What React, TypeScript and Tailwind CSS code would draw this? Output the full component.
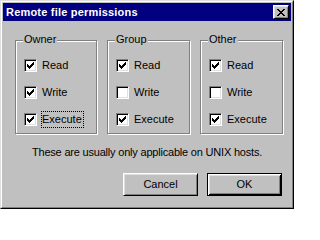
import React from "react";

const CHECK_ROWS: [number, number, number][] = [
  [6, 0, 1],
  [5, 1, 2],
  [0, 2, 1],
  [4, 2, 3],
  [0, 3, 2],
  [3, 3, 3],
  [0, 4, 5],
  [1, 5, 3],
  [2, 6, 1],
];

function CheckMark() {
  return (
    <svg width="7" height="7" viewBox="0 0 7 7" shapeRendering="crispEdges">
      {CHECK_ROWS.map(([x, y, w], i) => (
        <rect key={i} x={x} y={y} width={w} height={1} fill="#000" />
      ))}
    </svg>
  );
}

const X_ROWS: [number, number, number][] = [
  [0, 0, 2],
  [6, 0, 2],
  [1, 1, 2],
  [5, 1, 2],
  [2, 2, 4],
  [3, 3, 2],
  [2, 4, 4],
  [1, 5, 2],
  [5, 5, 2],
  [0, 6, 2],
  [6, 6, 2],
];

function CloseGlyph() {
  return (
    <svg width="8" height="7" viewBox="0 0 8 7" shapeRendering="crispEdges">
      {X_ROWS.map(([x, y, w], i) => (
        <rect key={i} x={x} y={y} width={w} height={1} fill="#000" />
      ))}
    </svg>
  );
}

function Checkbox({ label, checked, focused }: { label: string; checked: boolean; focused?: boolean }) {
  return (
    <div className="flex items-center h-[13px] gap-[4px]">
      <div className="w-[13px] h-[13px] shrink-0 bg-white border border-t-[#808080] border-l-[#808080] border-r-white border-b-white shadow-[inset_1px_1px_0_#000,inset_-1px_-1px_0_#dfdfdf] flex items-center justify-center">
        {checked && <CheckMark />}
      </div>
      <span
        className={
          "leading-[15px] h-[17px] pr-[1px] border border-dotted " +
          (focused ? "border-black" : "border-transparent")
        }
      >
        {label}
      </span>
    </div>
  );
}

function Group({
  title,
  width,
  items,
}: {
  title: string;
  width: string;
  items: { label: string; checked: boolean; focused?: boolean }[];
}) {
  return (
    <div
      className={
        "relative h-[94px] border border-[#808080] shadow-[inset_1px_1px_0_#fff,1px_1px_0_#fff] pt-[18px] pl-[8px] " +
        width
      }
    >
      <span className="absolute top-[-8px] left-[7px] px-[1px] bg-[#c0c0c0] leading-[13px]">{title}</span>
      <div className="flex flex-col gap-[14px]">
        {items.map((it) => (
          <Checkbox key={it.label} {...it} />
        ))}
      </div>
    </div>
  );
}

export default function App() {
  return (
    <div className="w-[294px] h-[209px] bg-[#c0c0c0] border border-t-[#dfdfdf] border-l-[#dfdfdf] border-r-black border-b-black font-['Liberation_Sans',Arial,sans-serif] text-[11px] text-black">
      <div className="h-full border border-t-white border-l-white border-r-[#808080] border-b-[#808080] p-px flex flex-col">
        <div className="h-[18px] bg-[#000080] flex items-center justify-between pl-[3px] pr-[2px]">
          <span className="text-white font-bold text-[11px] leading-[13px] tracking-[0.2px]">Remote file permissions</span>
          <div className="w-[16px] h-[14px] bg-[#c0c0c0] border border-t-white border-l-white border-r-black border-b-black shadow-[inset_1px_1px_0_#dfdfdf,inset_-1px_-1px_0_#808080] flex items-center justify-center">
            <CloseGlyph />
          </div>
        </div>
        <div className="flex gap-[10px] mt-[19px] ml-[12px]">
          <Group
            title="Owner"
            width="w-[82px]"
            items={[
              { label: "Read", checked: true },
              { label: "Write", checked: true },
              { label: "Execute", checked: true, focused: true },
            ]}
          />
          <Group
            title="Group"
            width="w-[83px]"
            items={[
              { label: "Read", checked: true },
              { label: "Write", checked: false },
              { label: "Execute", checked: true },
            ]}
          />
          <Group
            title="Other"
            width="w-[83px]"
            items={[
              { label: "Read", checked: true },
              { label: "Write", checked: false },
              { label: "Execute", checked: true },
            ]}
          />
        </div>
        <div className="mt-[12px] text-center leading-[13px] tracking-[-0.2px]">These are usually only applicable on UNIX hosts.</div>
        <div className="mt-[14px] flex justify-end gap-[9px] pr-[9px]">
          <div className="w-[75px] h-[23px] border border-t-white border-l-white border-r-black border-b-black shadow-[inset_1px_1px_0_#dfdfdf,inset_-1px_-1px_0_#808080] flex items-center justify-center">
            Cancel
          </div>
          <div className="w-[75px] h-[23px] border border-black shadow-[inset_1px_1px_0_#fff,inset_-1px_-1px_0_#000,inset_2px_2px_0_#dfdfdf,inset_-2px_-2px_0_#808080] flex items-center justify-center">
            OK
          </div>
        </div>
      </div>
    </div>
  );
}
